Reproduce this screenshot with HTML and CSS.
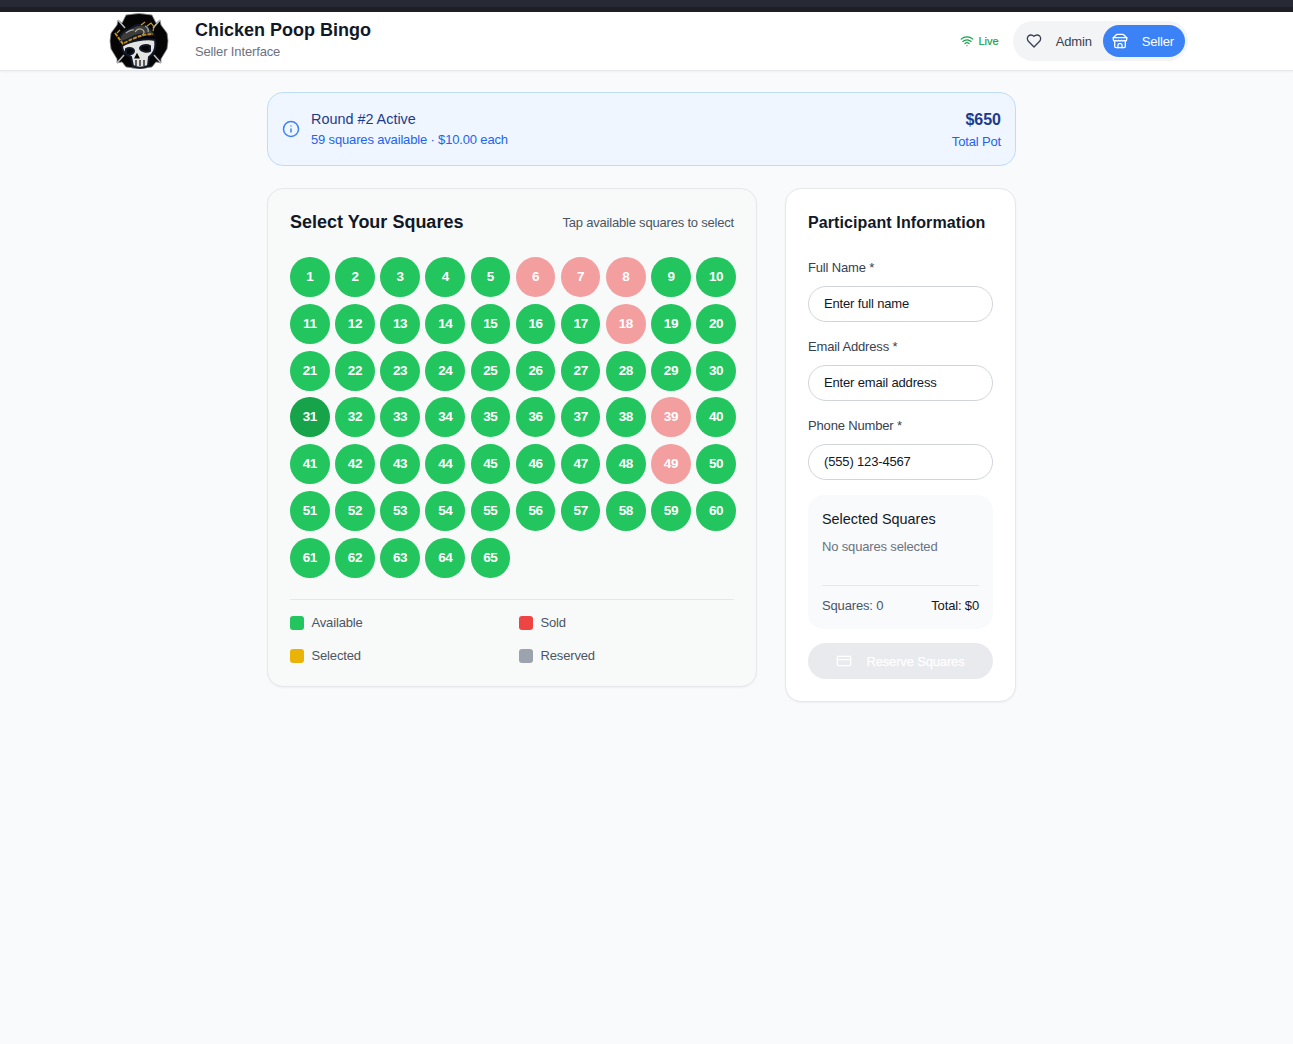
FILE: index.html
```html
<!DOCTYPE html>
<html lang="en">
<head>
  <meta charset="UTF-8" />
  <meta name="viewport" content="width=device-width, initial-scale=1.0"/>
  <title>Chicken Poop Bingo</title>
  <link rel="stylesheet" href="styles.css">
</head>
<body>
  <div class="topbar"></div>

  <header class="header">
    <div class="brand">
      <svg class="logo" viewBox="0 0 60 56">
        <path d="M17 2Q30-1 43 2L47 10 51 7 52 12 58 20Q60 28 58 36L52 46 52 50 47 49 43 54Q30 57 17 54L13 49 8 50 8 46 2 36Q0 28 2 20L8 12 9 7 13 10Z" fill="#050505" stroke="#8f9296" stroke-width="0.8"/>
        <path d="M44 15l7-8M16 15L9 7M45 42l7 8M15 42l-7 8" stroke="#b4b7ba" stroke-width="1.6"/>
        <path d="M11 24c2-7 8-6 13-10 6-4 14-3 20 5l1 3c-7-2-13-1-19 1-5 2-10 6-15 6z" fill="#3d3c38"/>
        <path d="M17 20c3-2 5-4 8-3M26 19c2-3 5-4 8-2 2 2 1 4-1 5M36 13c2 1 4 3 3 6" fill="none" stroke="#a9a9a2" stroke-width="1.3"/>
        <path d="M6 20l8 11c7-4 18-10 30-10" fill="none" stroke="#c08d1c" stroke-width="2" stroke-dasharray="4 1"/>
        <path d="M32 12l4-3M38 13l4-3 3 4-1 4M8 20l3-3" fill="none" stroke="#c9992e" stroke-width="1.2"/>
        <path d="M13 33c8-5 24-8 33-6 1 6 0 13-6 17l-1 9c-5 2-11 2-15 0l-2-9c-5-2-9-6-9-11z" fill="#e4e4e2"/>
        <path d="M17 36c3-2 8-1 8 2 0 3-6 5-8 3zM41 33c-3-2-9-1-10 2 0 3 7 5 10 3z" fill="#050505"/>
        <path d="M28 41l-2 4h4zM27 47v6M31 47v6M35 47v6" stroke="#050505" stroke-width="1.2" fill="#050505"/>
      </svg>
      <div class="brand-text">
        <h1 class="brand-title">Chicken Poop Bingo</h1>
        <p class="brand-sub">Seller Interface</p>
      </div>
    </div>
    <div class="header-right">
      <span class="live">
        <svg class="icon-live" viewBox="0 0 24 24"><path d="M12 20h.01"/><path d="M2 8.82a15 15 0 0 1 20 0"/><path d="M5 12.859a10 10 0 0 1 14 0"/><path d="M8.5 16.429a5 5 0 0 1 7 0"/></svg>
        Live
      </span>
      <div class="switch">
        <a class="switch-btn">
          <svg class="icon-switch" viewBox="0 0 24 24"><path d="M19 14c1.49-1.46 3-3.21 3-5.5A5.5 5.5 0 0 0 16.5 3c-1.76 0-3 .5-4.5 2-1.5-1.5-2.74-2-4.5-2A5.5 5.5 0 0 0 2 8.5c0 2.3 1.5 4.05 3 5.5l7 7Z"/></svg>
          Admin
        </a>
        <a class="switch-btn active">
          <svg class="icon-switch" viewBox="0 0 24 24"><path d="m2 7 4.41-4.41A2 2 0 0 1 7.83 2h8.34a2 2 0 0 1 1.42.59L22 7"/><path d="M4 12v8a2 2 0 0 0 2 2h12a2 2 0 0 0 2-2v-8"/><path d="M15 22v-4a2 2 0 0 0-2-2h-2a2 2 0 0 0-2 2v4"/><path d="M2 7h20"/><path d="M22 7v3a2 2 0 0 1-2 2a2.7 2.7 0 0 1-1.59-.63.7.7 0 0 0-.82 0A2.7 2.7 0 0 1 16 12a2.7 2.7 0 0 1-1.59-.63.7.7 0 0 0-.82 0A2.7 2.7 0 0 1 12 12a2.7 2.7 0 0 1-1.59-.63.7.7 0 0 0-.82 0A2.7 2.7 0 0 1 8 12a2.7 2.7 0 0 1-1.59-.63.7.7 0 0 0-.82 0A2.7 2.7 0 0 1 4 12a2 2 0 0 1-2-2V7"/></svg>
          Seller
        </a>
      </div>
    </div>
  </header>

  <main class="main">
    <!-- Round banner -->
    <section class="banner">
      <div class="banner-left">
        <svg class="icon-info" viewBox="0 0 24 24"><circle cx="12" cy="12" r="10"/><path d="M12 16v-4"/><path d="M12 8h.01"/></svg>
        <div class="banner-text">
          <div class="banner-title">Round #2 Active</div>
          <div class="banner-sub">59 squares available · $10.00 each</div>
        </div>
      </div>
      <div class="banner-right">
        <div class="pot">$650</div>
        <div class="pot-label">Total Pot</div>
      </div>
    </section>

    <div class="columns">
      <!-- Squares -->
      <section class="card card-squares">
        <div class="card-head">
          <h2 class="card-title">Select Your Squares</h2>
          <span class="hint">Tap available squares to select</span>
        </div>
        <div class="grid">
          <button class="sq">1</button><button class="sq">2</button><button class="sq">3</button><button class="sq">4</button><button class="sq">5</button>
          <button class="sq sold">6</button><button class="sq sold">7</button><button class="sq sold">8</button><button class="sq">9</button><button class="sq">10</button>
          <button class="sq">11</button><button class="sq">12</button><button class="sq">13</button><button class="sq">14</button><button class="sq">15</button>
          <button class="sq">16</button><button class="sq">17</button><button class="sq sold">18</button><button class="sq">19</button><button class="sq">20</button>
          <button class="sq">21</button><button class="sq">22</button><button class="sq">23</button><button class="sq">24</button><button class="sq">25</button>
          <button class="sq">26</button><button class="sq">27</button><button class="sq">28</button><button class="sq">29</button><button class="sq">30</button>
          <button class="sq hover">31</button><button class="sq">32</button><button class="sq">33</button><button class="sq">34</button><button class="sq">35</button>
          <button class="sq">36</button><button class="sq">37</button><button class="sq">38</button><button class="sq sold">39</button><button class="sq">40</button>
          <button class="sq">41</button><button class="sq">42</button><button class="sq">43</button><button class="sq">44</button><button class="sq">45</button>
          <button class="sq">46</button><button class="sq">47</button><button class="sq">48</button><button class="sq sold">49</button><button class="sq">50</button>
          <button class="sq">51</button><button class="sq">52</button><button class="sq">53</button><button class="sq">54</button><button class="sq">55</button>
          <button class="sq">56</button><button class="sq">57</button><button class="sq">58</button><button class="sq">59</button><button class="sq">60</button>
          <button class="sq">61</button><button class="sq">62</button><button class="sq">63</button><button class="sq">64</button><button class="sq">65</button>
        </div>
        <div class="legend">
          <div class="legend-item"><span class="swatch green"></span>Available</div>
          <div class="legend-item"><span class="swatch red"></span>Sold</div>
          <div class="legend-item"><span class="swatch amber"></span>Selected</div>
          <div class="legend-item"><span class="swatch gray"></span>Reserved</div>
        </div>
      </section>

      <!-- Form -->
      <section class="card card-form">
        <h2 class="form-title">Participant Information</h2>
        <div class="field">
          <label class="label">Full Name *</label>
          <input class="input" placeholder="Enter full name">
        </div>
        <div class="field">
          <label class="label">Email Address *</label>
          <input class="input" placeholder="Enter email address">
        </div>
        <div class="field">
          <label class="label">Phone Number *</label>
          <input class="input" placeholder="(555) 123-4567">
        </div>
        <div class="summary">
          <div class="summary-title">Selected Squares</div>
          <div class="summary-empty">No squares selected</div>
          <div class="summary-foot">
            <span>Squares: 0</span>
            <span class="summary-total">Total: $0</span>
          </div>
        </div>
        <button class="reserve" disabled>
          <svg class="icon-card" viewBox="0 0 24 24"><rect width="20" height="14" x="2" y="5" rx="2"/><path d="M2 10h20"/></svg>
          Reserve Squares
        </button>
      </section>
    </div>
  </main>
</body>
</html>
```

FILE: styles.css
```css
* {
  box-sizing: border-box;
}
body {
  margin: 0;
  min-height: 1044px;
  background-color: #f9fafb;
  color: #111827;
  font-family: "Liberation Sans", Arial, sans-serif;
}
svg {
  fill: none;
  stroke: currentColor;
  stroke-width: 2;
  stroke-linecap: round;
  stroke-linejoin: round;
  flex-shrink: 0;
}
h1, h2, p {
  margin: 0;
}
.topbar {
  height: 12px;
  background: linear-gradient(#272a35 0, #272a35 7px, #1d1f27 7px);
}
.header {
  height: 59px;
  padding: 0 105px 0 109px;
  display: flex;
  align-items: center;
  justify-content: space-between;
  background-color: #fff;
  border-bottom: 1px solid #e5e7eb;
  box-shadow: 0 1px 2px rgba(0, 0, 0, 0.05);
}
.brand {
  display: flex;
  align-items: center;
  gap: 26px;
}
.brand-text {
  padding-bottom: 4px;
}
.logo {
  width: 60px;
  height: 56px;
  stroke-linecap: butt;
  stroke-linejoin: miter;
}
.brand-title {
  font-size: 18px;
  line-height: 26px;
  font-weight: 700;
}
.brand-sub {
  font-size: 13px;
  letter-spacing: -0.14px;
  line-height: 18px;
  color: #6b7280;
}
.header-right {
  display: flex;
  align-items: center;
  gap: 14px;
}
.live {
  display: flex;
  align-items: center;
  gap: 4px;
  font-size: 11px;
  font-weight: 500;
  color: #16a34a;
  -webkit-text-stroke: 0.2px #16a34a;
}
.icon-live {
  width: 14px;
  height: 14px;
}
.switch {
  display: flex;
  align-items: center;
  height: 40px;
  padding: 4px 3px 4px 4px;
  border-radius: 20px;
  background-color: #f3f4f6;
}
.switch-btn {
  display: flex;
  align-items: center;
  gap: 14px;
  height: 32px;
  padding: 0 11px 0 9px;
  border-radius: 16px;
  font-size: 13px;
  letter-spacing: -0.16px;
  color: #374151;
}
.switch-btn.active {
  background-color: #3b82f6;
  color: #fff;
}
.icon-switch {
  width: 16px;
  height: 16px;
}
.main {
  width: 749px;
  margin: 21px auto 0 267px;
}
.banner {
  height: 74px;
  padding: 0 14px;
  display: flex;
  align-items: center;
  justify-content: space-between;
  background-color: #eff6ff;
  border: 1px solid #bfdbfe;
  border-radius: 16px;
}
.banner-left {
  display: flex;
  align-items: center;
  gap: 11px;
}
.banner-text {
  padding-top: 1px;
}
.icon-info {
  width: 18px;
  height: 18px;
  color: #3b82f6;
}
.banner-title {
  font-size: 14.4px;
  line-height: 20px;
  color: #1e3a8a;
}
.banner-sub {
  margin-top: 1px;
  font-size: 13px;
  letter-spacing: -0.16px;
  line-height: 20px;
  color: #2563eb;
}
.banner-right {
  text-align: right;
}
.pot {
  font-size: 16px;
  line-height: 25px;
  font-weight: 700;
  color: #1e3a8a;
}
.pot-label {
  font-size: 13px;
  letter-spacing: -0.16px;
  line-height: 19px;
  color: #2563eb;
}
.columns {
  display: flex;
  align-items: flex-start;
  gap: 28px;
  margin-top: 22px;
}
.card {
  border: 1px solid #e5e7eb;
  border-radius: 16px;
  box-shadow: 0 1px 2px rgba(0, 0, 0, 0.05);
}
.card-squares {
  width: 490px;
  height: 499px;
  padding: 22px;
  background-color: #f8fafa;
}
.card-form {
  width: 231px;
  height: 514px;
  padding: 22px;
  background-color: #fff;
}
.card-head {
  display: flex;
  align-items: center;
  justify-content: space-between;
  height: 22px;
}
.card-title {
  font-size: 18px;
  line-height: 22px;
  font-weight: 700;
  color: #111827;
}
.hint {
  font-size: 13px;
  letter-spacing: -0.2px;
  color: #4b5563;
}
.grid {
  display: grid;
  grid-template-columns: repeat(10, 39.65px);
  grid-auto-rows: 40px;
  gap: 6.8px 5.5px;
  margin-top: 24px;
}
.sq {
  padding: 0 0 1px;
  border: none;
  border-radius: 50%;
  background-color: #22c55e;
  color: #fff;
  font-family: inherit;
  font-size: 13.5px;
  letter-spacing: -0.4px;
  font-weight: 700;
}
.sq.sold {
  background-color: #f39e9f;
}
.sq.hover {
  background-color: #16a34a;
}
.legend {
  display: grid;
  grid-template-columns: 229px 1fr;
  row-gap: 19px;
  margin-top: 21px;
  padding-top: 16px;
  border-top: 1px solid #e5e7eb;
}
.legend-item {
  display: flex;
  align-items: center;
  gap: 7.5px;
  height: 14px;
  font-size: 13px;
  letter-spacing: -0.16px;
  color: #4b5563;
}
.swatch {
  width: 14px;
  height: 14px;
  border-radius: 3px;
}
.swatch.green {
  background-color: #22c55e;
}
.swatch.red {
  background-color: #ef4444;
}
.swatch.amber {
  background-color: #eab308;
}
.swatch.gray {
  background-color: #9ca3af;
}
.form-title {
  padding-top: 1px;
  margin-bottom: 24px;
  font-size: 16px;
  letter-spacing: 0.1px;
  line-height: 22px;
  font-weight: 700;
  white-space: nowrap;
  color: #111827;
}
.field {
  margin-bottom: 15px;
}
.label {
  display: block;
  margin-bottom: 8px;
  font-size: 13px;
  letter-spacing: -0.16px;
  line-height: 20px;
  color: #374151;
}
.input {
  display: block;
  width: 100%;
  height: 36px;
  padding: 0 15px 1px;
  background-color: #fff;
  border: 1px solid #d1d5db;
  border-radius: 18px;
  font-family: inherit;
  font-size: 13px;
  letter-spacing: -0.16px;
}
.input::placeholder {
  color: #111827;
  opacity: 1;
}
.summary {
  height: 134px;
  margin-top: 15px;
  padding: 14px;
  background-color: #f9fafb;
  border-radius: 16px;
}
.summary-title {
  font-size: 14.4px;
  line-height: 20px;
}
.summary-empty {
  margin-top: 8px;
  font-size: 13px;
  letter-spacing: -0.16px;
  line-height: 20px;
  color: #6b7280;
}
.summary-foot {
  display: flex;
  justify-content: space-between;
  margin-top: 28px;
  padding-top: 12px;
  border-top: 1px solid #e5e7eb;
  font-size: 13px;
  letter-spacing: -0.16px;
  color: #4b5563;
}
.summary-total {
  color: #111827;
}
.reserve {
  display: flex;
  align-items: center;
  justify-content: center;
  gap: 14px;
  width: 100%;
  height: 36px;
  margin-top: 14px;
  border: none;
  border-radius: 18px;
  background-color: #e9eaee;
  color: #fff;
  font-family: inherit;
  font-size: 13px;
  letter-spacing: -0.16px;
  -webkit-text-stroke: 0.25px #fff;
}
.icon-card {
  width: 16px;
  height: 16px;
}
```
